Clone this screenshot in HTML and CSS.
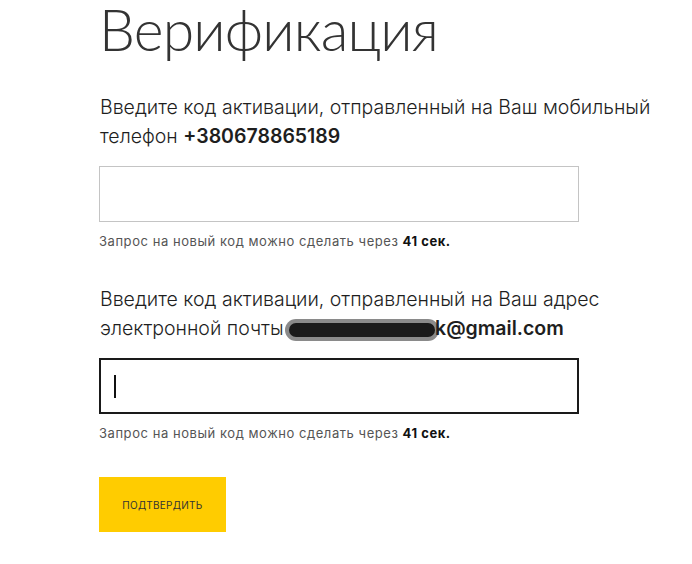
FILE: index.html
```html
<!DOCTYPE html>
<html lang="ru">
<head>
    <meta charset="UTF-8">
    <meta name="viewport" content="width=device-width, initial-scale=1.0">
    <title>Верификация</title>
    <link rel="stylesheet" href="styles.css">
</head>
<body>
    <div class="page-container">
        <h1 class="page-title">Верификация</h1>

        <form class="verify-form">
            <div class="verify-block">
                <p class="verify-text">Введите код активации, отправленный на Ваш мобильный телефон <b>+380678865189</b></p>
                <input type="text" class="code-input" name="sms_code">
                <p class="resend-note">Запрос на новый код можно сделать через <b>41 сек.</b></p>
            </div>

            <div class="verify-block">
                <p class="verify-text">Введите код активации, отправленный на Ваш адрес электронной почты <span class="scribble"></span><b>k@gmail.com</b></p>
                <div class="code-input is-focused"><span class="caret"></span></div>
                <p class="resend-note">Запрос на новый код можно сделать через <b>41 сек.</b></p>
            </div>

            <button type="submit" class="confirm-button">ПОДТВЕРДИТЬ</button>
        </form>
    </div>
</body>
</html>
```

FILE: styles.css
```css
body, html {
    margin: 0;
    background-color: #fff;
    font-family: 'Inter', 'Noto Sans', sans-serif;
    color: #1e1e1e;
}

.page-container {
    padding: 0 0 0 99px;
    overflow: hidden;
}

.page-title {
    font-family: 'Lato', 'Inter', sans-serif;
    font-size: 57px;
    font-weight: 300;
    line-height: 58px;
    margin: 0;
    letter-spacing: -0.8px;
    color: #333;
}

.verify-form {
    margin-top: 35px;
}

.verify-block {
    margin-bottom: 36px;
}

.verify-text {
    font-size: 19.5px;
    font-weight: 300;
    line-height: 29px;
    margin: 0 0 15px 1px;
    max-width: 580px;
}

.verify-text b {
    font-weight: 600;
}

.code-input {
    display: block;
    box-sizing: border-box;
    width: 480px;
    height: 56px;
    border: 1px solid #c4c4c4;
    background: #fff;
    margin: 0;
    padding: 0 14px;
    outline: none;
}

.code-input.is-focused {
    border: 2px solid #1a1a1a;
    display: flex;
    align-items: center;
    padding: 0 13px;
}

.caret {
    display: block;
    width: 2px;
    height: 23px;
    background: #111;
}

.resend-note {
    font-size: 13px;
    letter-spacing: 0.55px;
    font-weight: 400;
    color: #555;
    margin: 11px 0 0 0;
}

.resend-note b {
    font-weight: 700;
    color: #111;
}

.scribble {
    display: inline-block;
    width: 146px;
    height: 14px;
    background: #1a1a1a;
    border-radius: 7px;
    box-shadow: 0 0 0 4px #8a8a8a;
    vertical-align: -2px;
    margin: 0 0 0 0;
}

.confirm-button {
    font-family: 'Inter', 'Noto Sans', sans-serif;
    font-size: 10px;
    letter-spacing: 0.3px;
    background-color: #ffcc00;
    color: #333;
    border: none;
    width: 127px;
    height: 55px;
    padding: 0;
    margin-top: 0;
    cursor: pointer;
}
```
